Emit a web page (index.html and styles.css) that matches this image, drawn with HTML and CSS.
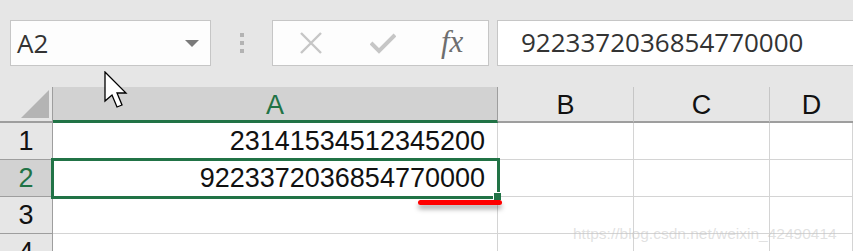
FILE: index.html
```html
<!DOCTYPE html>
<html>
	<head>
		<meta charset="utf-8">
		<title>Excel</title>
		<link rel="stylesheet" href="styles.css">
	</head>
	<body>
		<div class="toolbar">
			<div class="name-box">
				<span class="name-box__text">A2</span>
				<span class="name-box__arrow"></span>
			</div>
			<div class="grip">
				<span></span><span></span><span></span>
			</div>
			<div class="fx-buttons">
				<svg class="fx-buttons__icon" width="24" height="22" viewBox="0 0 24 22">
					<path d="M2 1 L22 21 M22 1 L2 21" stroke="#c6c6c6" stroke-width="2.4" fill="none"/>
				</svg>
				<svg class="fx-buttons__icon" width="26" height="22" viewBox="0 0 26 22">
					<path d="M1 11 L9 19 L25 3" stroke="#c6c6c6" stroke-width="4" fill="none"/>
				</svg>
				<span class="fx-buttons__fx">fx</span>
			</div>
			<div class="formula">9223372036854770000</div>
		</div>
		<div class="sheet">
			<div class="corner"><span class="corner__tri"></span></div>
			<div class="col-head col-head--active">A</div>
			<div class="col-head">B</div>
			<div class="col-head">C</div>
			<div class="col-head col-head--last">D</div>

			<div class="row-head">1</div>
			<div class="cell">23141534512345200</div>
			<div class="cell"></div>
			<div class="cell"></div>
			<div class="cell"></div>

			<div class="row-head row-head--active">2</div>
			<div class="cell cell--selected">9223372036854770000</div>
			<div class="cell"></div>
			<div class="cell"></div>
			<div class="cell"></div>

			<div class="row-head">3</div>
			<div class="cell"></div>
			<div class="cell"></div>
			<div class="cell"></div>
			<div class="cell"></div>

			<div class="row-head">4</div>
			<div class="cell"></div>
			<div class="cell"></div>
			<div class="cell"></div>
			<div class="cell"></div>
		</div>
		<div class="red-mark"></div>
		<div class="watermark">https://blog.csdn.net/weixin_42490414</div>
		<svg class="cursor" width="26" height="40" viewBox="0 0 26 40">
			<path d="M1 1 L1 30 L8 24 L13 36 L18 34 L13 22 L22 22 Z" fill="#fff" stroke="#000" stroke-width="1.3" stroke-linejoin="miter"/>
		</svg>
	</body>
</html>
```

FILE: styles.css
```css
body {
	position: relative;
	width: 853px;
	height: 251px;
	margin: 0;
	overflow: hidden;
	background: #e6e6e6;
	font-family: "Liberation Sans", Arial, sans-serif;
}
.toolbar {
	display: flex;
	height: 46px;
	padding: 20px 0 0 10px;
}
.name-box {
	box-sizing: border-box;
	width: 201px;
	height: 46px;
	display: flex;
	align-items: center;
	justify-content: space-between;
	padding: 0 11px 0 6px;
	background: #fdfdfd;
	border: 1px solid #c6c6c6;
}
.name-box__text {
	font-family: "Open Sans", sans-serif;
	font-size: 26px;
	color: #333;
}
.name-box__arrow {
	width: 0;
	height: 0;
	border-left: 7px solid transparent;
	border-right: 7px solid transparent;
	border-top: 7px solid #7a7a7a;
}
.grip {
	width: 61px;
	display: flex;
	flex-direction: column;
	align-items: center;
	justify-content: center;
	gap: 4px;
}
.grip span {
	width: 4px;
	height: 4px;
	background: #b3b3b3;
}
.fx-buttons {
	box-sizing: border-box;
	width: 217px;
	height: 46px;
	display: flex;
	align-items: center;
	padding: 0 0 0 26px;
	background: #fdfdfd;
	border: 1px solid #c6c6c6;
}
.fx-buttons__icon {
	margin-right: 47px;
}
.fx-buttons__icon + .fx-buttons__icon {
	margin-right: 45px;
}
.fx-buttons__fx {
	font-family: "Liberation Serif", serif;
	font-style: italic;
	font-size: 31px;
	color: #6e6e6e;
	margin-top: -2px;
}
.formula {
	box-sizing: border-box;
	flex: 1;
	height: 46px;
	margin-left: 8px;
	padding-left: 23px;
	background: #fff;
	border: 1px solid #c6c6c6;
	border-right: none;
	font-family: "Open Sans", sans-serif;
	font-size: 26px;
	line-height: 43px;
	color: #333;
}
.sheet {
	display: grid;
	grid-template-columns: 53px 445px 136px 136px 1fr;
	grid-template-rows: 36px 37px 37px 37px 37px;
	margin-top: 21px;
	font-size: 27px;
	color: #111;
}
.corner {
	box-sizing: border-box;
	position: relative;
	border-right: 1px solid #9e9e9e;
	border-bottom: 2px solid #9e9e9e;
}
.corner__tri {
	position: absolute;
	right: 3px;
	bottom: 3px;
	width: 0;
	height: 0;
	border-left: 28px solid transparent;
	border-bottom: 28px solid #b4b4b4;
}
.col-head {
	box-sizing: border-box;
	text-align: center;
	line-height: 36px;
	border-right: 1px solid #c6c6c6;
	border-bottom: 2px solid #9e9e9e;
}
.col-head--active {
	background: #d2d2d2;
	color: #217346;
	border-right-color: #9e9e9e;
	border-bottom: 3px solid #217346;
}
.col-head--last {
	border-right: none;
}
.row-head {
	box-sizing: border-box;
	text-align: center;
	line-height: 37px;
	border-right: 1px solid #9e9e9e;
	border-bottom: 1px solid #9e9e9e;
}
.row-head--active {
	background: #d2d2d2;
	color: #217346;
}
.cell {
	box-sizing: border-box;
	background: #fff;
	text-align: right;
	padding-right: 12px;
	line-height: 37px;
	border-right: 1px solid #d4d4d4;
	border-bottom: 1px solid #d4d4d4;
	white-space: nowrap;
}
.cell--selected {
	position: relative;
	z-index: 1;
	outline: 3px solid #217346;
	outline-offset: -1px;
}
.cell--selected::after {
	content: "";
	position: absolute;
	right: -4px;
	bottom: -4px;
	width: 7px;
	height: 7px;
	background: #217346;
	border-left: 1px solid #fff;
	border-top: 1px solid #fff;
}
.red-mark {
	position: absolute;
	left: 418px;
	top: 200px;
	width: 84px;
	height: 5px;
	border-radius: 3px;
	background: #ff0000;
	box-shadow: 0 4px 5px rgba(0, 0, 0, 0.35);
	z-index: 2;
}
.watermark {
	position: absolute;
	left: 573px;
	top: 225px;
	font-size: 15.5px;
	color: rgba(195, 195, 195, 0.5);
	z-index: 2;
}
.cursor {
	position: absolute;
	left: 104px;
	top: 71px;
	z-index: 3;
}
```
